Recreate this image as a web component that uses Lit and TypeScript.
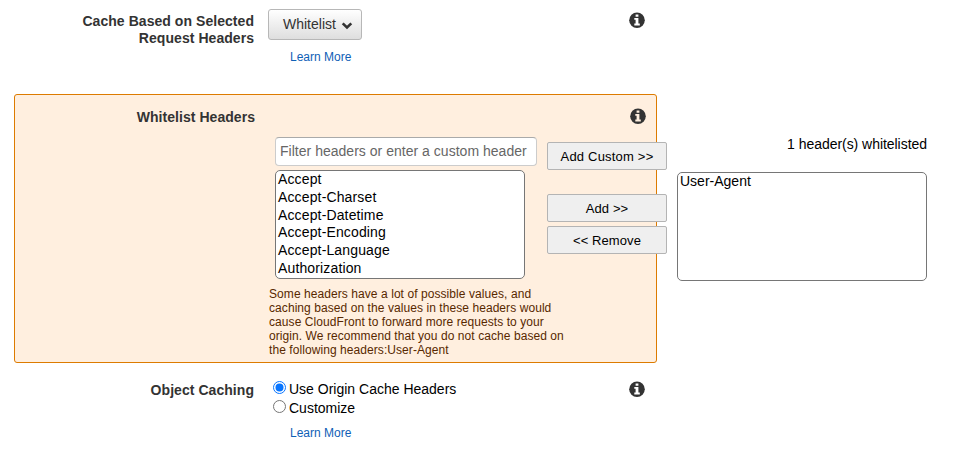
import { LitElement, html, css } from "lit";
import { customElement, property } from "lit/decorators.js";

@customElement("info-icon")
class InfoIcon extends LitElement {
  static styles = css`
    :host { display: block; width: 16px; height: 16px; }
    svg { display: block; }
    .disc { fill: #333; }
    .glyph { fill: var(--glyph, #fff); }
  `;
  render() {
    return html`<svg width="16" height="16" viewBox="0 0 16 16">
      <circle class="disc" cx="8" cy="8.2" r="7.8"></circle>
      <path class="glyph" d="M6.6 2.4h2.8v2.3H6.6zM5.3 5.9h4.1v5.6h1.4v2H5.3v-2h1.3V7.8H5.3z"></path>
    </svg>`;
  }
}

@customElement("header-list")
class HeaderList extends LitElement {
  @property({ attribute: false }) items: string[] = [];
  static styles = css`
    :host {
      display: block; box-sizing: border-box; width: 250px; height: 109px;
      border: 1px solid #767676; border-radius: 5px; background: #fff;
      padding: 0 2px; overflow: hidden;
    }
    .item { height: 17.8px; line-height: 17.8px; font-size: 14px; letter-spacing: var(--tracking, 0); color: #000; white-space: nowrap; }
  `;
  render() {
    return this.items.map((i) => html`<div class="item">${i}</div>`);
  }
}

@customElement("app-root")
class AppRoot extends LitElement {
  static styles = css`
    :host {
      display: block; width: 958px; height: 460px; overflow: hidden; background: #fff;
      font-family: "Liberation Sans", Arial, sans-serif; font-size: 14px; color: #000;
    }
    * { box-sizing: border-box; }
    .row { display: grid; grid-template-columns: 254px 375px 16px; }
    .first { height: 94px; }
    .label { text-align: right; font-weight: bold; color: #333; line-height: 17px; letter-spacing: 0.05px; white-space: nowrap; }
    .first .label { padding-top: 13px; }
    .first info-icon { margin-top: 12px; }
    .field { padding-left: 14px; }
    .first .field { padding-top: 9px; }
    .select {
      width: 94px; height: 31px; display: flex; align-items: center; gap: 5px; padding: 0 0 1px 14px;
      border: 1px solid #b7b7b7; border-radius: 3px; font: inherit; color: #333;
      background: linear-gradient(#fff, #dedede);
    }
    .select svg { display: block; margin-top: 4px; }
    .link { display: block; width: max-content; margin-left: 22px; font-size: 12px; line-height: 14px; color: #0f60b6; text-decoration: none; }
    .first .link { margin-top: 10px; }
    .panel {
      width: 643px; height: 269px; margin-left: 14px;
      border: 1px solid #dd7b00; border-radius: 3px; background: #ffefdf;
    }
    .panel .row { grid-template-columns: 240px 375px 16px; height: 42px; }
    .panel .label { padding-top: 14px; }
    .panel info-icon { margin-top: 13px; --glyph: #ffefdf; }
    .transfer { display: grid; grid-template-columns: 262px 120px 250px; gap: 10px; width: 662px; height: 142px; margin-left: 260px; }
    .filter {
      display: block; width: 262px; height: 29px; margin: 0 0 4px; padding: 0 4px 2px; outline: 0;
      border: 1px solid #ccc; border-top-color: #aaa; border-radius: 4px; background: #fff; font: inherit;
    }
    .filter::placeholder { color: #666; opacity: 1; letter-spacing: 0.02px; }
    .available { --tracking: 0.14px; }
    .actions { padding-top: 5px; }
    .btn {
      display: block; width: 120px; height: 28px; padding: 0; margin: 0 0 4px;
      border: 1px solid #b4b4b4; border-radius: 2px; background: #efefef;
      font: 13px "Liberation Sans", Arial, sans-serif; letter-spacing: 0.1px; color: #000;
    }
    .custom { margin-bottom: 24px; letter-spacing: 0.2px; }
    .count { height: 35px; line-height: 14px; letter-spacing: -0.04px; text-align: right; white-space: nowrap; }
    .note { width: 310px; margin: 8px 0 0 254px; font-size: 12px; line-height: 14px; letter-spacing: 0.07px; color: #582800; }
    .line { display: block; width: max-content; }
    .last { padding-top: 17px; }
    .last .label { padding-top: 2px; }
    .last info-icon { margin-top: 1px; }
    .last .field { padding-left: 19px; }
    .option { display: flex; align-items: flex-start; gap: 3px; height: 19px; line-height: 17px; white-space: nowrap; }
    .option svg { display: block; }
    .text { padding-top: 1px; }
    .last .link { margin: 8px 0 0 17px; }
    .on { fill: #0875ff; }
    .ring { fill: #fff; stroke: #0875ff; }
    .off { fill: #fff; stroke: #767676; }
  `;

  private headers = ["Accept", "Accept-Charset", "Accept-Datetime", "Accept-Encoding", "Accept-Language", "Authorization"];
  private note = [
    "Some headers have a lot of possible values, and",
    "caching based on the values in these headers would",
    "cause CloudFront to forward more requests to your",
    "origin. We recommend that you do not cache based on",
    "the following headers:User-Agent",
  ];

  private option(text: string, checked: boolean) {
    return html`<label class="option">
      <svg width="13" height="14" viewBox="0 0 13 14">
        <circle class=${checked ? "ring" : "off"} cx="6.5" cy="7.5" r="6"></circle>
        ${checked ? html`<svg><circle class="on" cx="6.5" cy="7.5" r="4"></circle></svg>` : ""}
      </svg><span class="text">${text}</span>
    </label>`;
  }

  render() {
    return html`
      <div class="row first">
        <div class="label">Cache Based on Selected<br />Request Headers</div>
        <div class="field">
          <button class="select">Whitelist
            <svg width="12" height="8" viewBox="0 0 12 8"><path d="M1.7 1.4 6 5.5l4.3-4.1" fill="none" stroke="#333" stroke-width="2.6"></path></svg>
          </button>
          <a class="link">Learn More</a>
        </div>
        <info-icon></info-icon>
      </div>
      <div class="panel">
        <div class="row">
          <div class="label">Whitelist Headers</div>
          <div></div>
          <info-icon></info-icon>
        </div>
        <div class="transfer">
          <div>
            <input class="filter" placeholder="Filter headers or enter a custom header" />
            <header-list class="available" .items=${this.headers}></header-list>
          </div>
          <div class="actions">
            <button class="btn custom">Add Custom &gt;&gt;</button>
            <button class="btn">Add &gt;&gt;</button>
            <button class="btn">&lt;&lt; Remove</button>
          </div>
          <div>
            <div class="count">1 header(s) whitelisted</div>
            <header-list .items=${["User-Agent"]}></header-list>
          </div>
        </div>
        <div class="note">${this.note.map((l) => html`<span class="line">${l}</span>`)}</div>
      </div>
      <div class="row last">
        <div class="label">Object Caching</div>
        <div class="field">
          ${this.option("Use Origin Cache Headers", true)}
          ${this.option("Customize", false)}
          <a class="link">Learn More</a>
        </div>
        <info-icon></info-icon>
      </div>
    `;
  }
}
